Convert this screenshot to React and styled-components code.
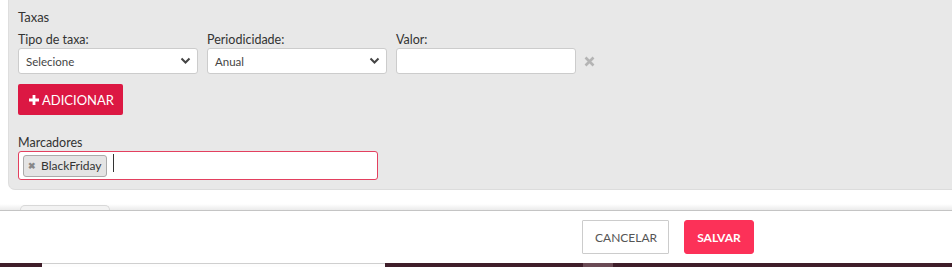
import React, { useState } from 'react';
import styled, { createGlobalStyle } from 'styled-components';

const GlobalStyle = createGlobalStyle`
  html, body {
    margin: 0;
    padding: 0;
    background: #fff;
    font-family: Lato, "Open Sans", Arial, sans-serif;
    color: #333;
  }
  * { box-sizing: border-box; }
`;

const Page = styled.div`
  width: 952px;
  height: 267px;
  overflow: hidden;
  display: flex;
  flex-direction: column;
`;

const Panel = styled.div`
  margin-left: 8px;
  height: 190px;
  background: #e8e8e8;
  border-bottom-left-radius: 7px;
  border-bottom: 1px solid #dcdcdc;
  border-left: 1px solid #dedede;
  padding: 9px 9px 0 9px;
`;

const Title = styled.div`
  font-size: 13px;
  line-height: 17px;
  margin-bottom: 6px;
`;

const Row = styled.div`
  display: flex;
  align-items: flex-end;
  gap: 9px;
`;

const Field = styled.div`
  display: flex;
  flex-direction: column;
  width: ${(p) => p.width || 180}px;
`;

const Label = styled.label`
  font-size: 12.5px;
  line-height: 16px;
  color: #333;
`;

const SelectBox = styled.div`
  position: relative;
  height: 26px;
  background: #fff;
  border: 1px solid #ccc;
  border-radius: 3px;
  display: flex;
  align-items: center;
  padding-left: 7px;
  font-size: 11.5px;
  color: #444;
`;

const Arrow = styled.svg`
  position: absolute;
  right: 6px;
  top: 8px;
`;

const TextInput = styled.input`
  height: 26px;
  border: 1px solid #ccc;
  border-radius: 3px;
  background: #fff;
  outline: none;
  font-family: inherit;
  font-size: 12px;
  padding: 0 7px;
`;

const RemoveBtn = styled.span`
  height: 26px;
  display: flex;
  align-items: center;
  margin-left: -1px;
`;

const AddButton = styled.button`
  margin-top: 10px;
  height: 31px;
  width: 105px;
  background: #dc1843;
  color: #fff;
  border: none;
  border-radius: 2px;
  font-family: inherit;
  font-size: 13px;
  display: flex;
  align-items: center;
  gap: 3px;
  padding: 0 0 0 11px;
  cursor: pointer;
`;

const TagsGroup = styled.div`
  margin-top: 20px;
  display: flex;
  flex-direction: column;
`;

const TagsInput = styled.div`
  width: 360px;
  height: 29px;
  background: #fff;
  border: 1px solid #e3405f;
  border-radius: 3px;
  display: flex;
  align-items: center;
  padding: 0 4px;
  gap: 6px;
`;

const Tag = styled.span`
  height: 22px;
  display: flex;
  align-items: center;
  gap: 5px;
  padding: 0 4px 0 4px;
  background: #e4e4e4;
  border: 1px solid #aaa;
  border-radius: 3px;
  font-size: 12px;
  color: #333;
`;

const TagX = styled.span`
  font-size: 9px;
  color: #888;
  font-weight: bold;
`;

const Caret = styled.span`
  width: 1px;
  height: 18px;
  background: #333;
  align-self: flex-start;
  margin-top: 2px;
`;

const Gap = styled.div`
  height: 20px;
  background: linear-gradient(to bottom, #fff 0%, #fff 70%, #ebebeb 100%);
  padding-left: 20px;
  display: flex;
  align-items: flex-end;
`;

const PeekTab = styled.div`
  width: 90px;
  height: 5px;
  border: 1px solid #d8d8d8;
  border-bottom: none;
  border-radius: 6px 6px 0 0;
  background: #f2f2f2;
`;

const Footer = styled.div`
  height: 53px;
  background: #fff;
  border-top: 1px solid #c4c4c4;
  display: flex;
  align-items: center;
  justify-content: flex-end;
  gap: 15px;
  padding: 0 198px 0 0;
`;

const FooterButton = styled.button`
  height: 34px;
  padding: 0 12px;
  border-radius: ${(p) => (p.primary ? '3px' : '1px')};
  border: 1px solid ${(p) => (p.primary ? '#fc3158' : '#ccc')};
  background: ${(p) => (p.primary ? '#fc3158' : '#fff')};
  color: ${(p) => (p.primary ? '#fff' : '#555')};
  font-family: inherit;
  font-weight: ${(p) => (p.primary ? 700 : 400)};
  font-size: 12px;
  width: ${(p) => p.width}px;
  cursor: pointer;
`;

const BottomStrip = styled.div`
  flex: 1;
  background: #3f1e2a;
  display: flex;
`;

const StripPiece = styled.div`
  margin-left: ${(p) => p.left}px;
  width: ${(p) => p.width}px;
  background: ${(p) => p.color};
  border-top: ${(p) => (p.light ? '1px solid #cfcfcf' : 'none')};
`;

const ChevronDown = () => (
  <Arrow width="11" height="8" viewBox="0 0 11 8">
    <path d="M1.5 1.5 L5.5 5.5 L9.5 1.5" fill="none" stroke="#444" strokeWidth="2" />
  </Arrow>
);

const Select = ({ value }) => (
  <SelectBox>
    {value}
    <ChevronDown />
  </SelectBox>
);

const App = () => {
  const [valor, setValor] = useState('');

  return (
    <>
      <GlobalStyle />
      <Page>
        <Panel>
          <Title>Taxas</Title>
          <Row>
            <Field width={180}>
              <Label>Tipo de taxa:</Label>
              <Select value="Selecione" />
            </Field>
            <Field width={180}>
              <Label>Periodicidade:</Label>
              <Select value="Anual" />
            </Field>
            <Field width={180}>
              <Label>Valor:</Label>
              <TextInput value={valor} onChange={(e) => setValor(e.target.value)} />
            </Field>
            <RemoveBtn>
              <svg width="11" height="11" viewBox="0 0 11 11">
                <path d="M1.5 1.5 L9.5 9.5 M9.5 1.5 L1.5 9.5" stroke="#b4b4b4" strokeWidth="2.6" />
              </svg>
            </RemoveBtn>
          </Row>
          <AddButton>
            <svg width="10" height="10" viewBox="0 0 10 10">
              <path d="M5 0 V10 M0 5 H10" stroke="#fff" strokeWidth="2.8" />
            </svg>
            ADICIONAR
          </AddButton>
          <TagsGroup>
            <Label>Marcadores</Label>
            <TagsInput>
              <Tag>
                <TagX>✖</TagX>
                BlackFriday
              </Tag>
              <Caret />
            </TagsInput>
          </TagsGroup>
        </Panel>
        <Gap>
          <PeekTab />
        </Gap>
        <Footer>
          <FooterButton width={87}>CANCELAR</FooterButton>
          <FooterButton primary width={70}>SALVAR</FooterButton>
        </Footer>
        <BottomStrip>
          <StripPiece left={42} width={343} color="#fdfdfd" light />
          <StripPiece left={198} width={30} color="#6a4a55" />
        </BottomStrip>
      </Page>
    </>
  );
};

export default App;
